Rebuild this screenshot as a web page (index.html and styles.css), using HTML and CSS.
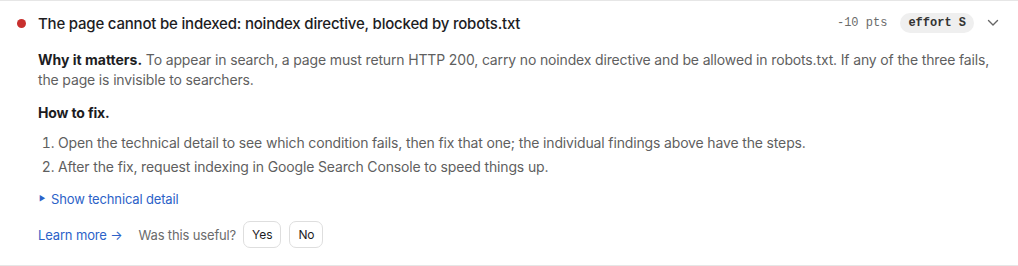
FILE: index.html
```html
<!DOCTYPE html>
<html lang="en">
<head>
<meta charset="utf-8">
<link rel="stylesheet" href="styles.css">
</head>
<body>
<section class="finding">
  <header class="finding-head">
    <span class="dot"></span>
    <h3 class="title">The page cannot be indexed: noindex directive, blocked by robots.txt</h3>
    <span class="pts">-10 pts</span>
    <span class="effort">effort S</span>
    <svg class="chev" width="12" height="8" viewBox="0 0 12 8"><path d="M1.5 1.5 L6 6 L10.5 1.5" fill="none" stroke="#666" stroke-width="1.4" stroke-linecap="round" stroke-linejoin="round"/></svg>
  </header>
  <div class="finding-body">
    <p class="why"><strong>Why it matters.</strong> To appear in search, a page must return HTTP 200, carry no noindex directive and be allowed in robots.txt. If any of the three fails, the page is invisible to searchers.</p>
    <h4 class="howto">How to fix.</h4>
    <ol class="steps">
      <li>Open the technical detail to see which condition fails, then fix that one; the individual findings above have the steps.</li>
      <li>After the fix, request indexing in Google Search Console to speed things up.</li>
    </ol>
    <div class="detail"><span class="tri">▶</span>Show technical detail</div>
    <div class="foot">
      <a class="learn" href="#">Learn more →</a>
      <span class="useful">Was this useful?</span>
      <button class="btn">Yes</button>
      <button class="btn">No</button>
    </div>
  </div>
</section>
</body>
</html>
```
FILE: styles.css
```css
* { box-sizing: border-box; }
body {
  margin: 0;
  background: #fff;
  font-family: Inter, "Noto Sans", sans-serif;
  color: #1f1f1f;
}
.finding {
  border-top: 1px solid #e6e6e6;
  border-bottom: 1px solid #e6e6e6;
  height: 266px;
}
.finding-head {
  display: flex;
  align-items: center;
  height: 44px;
  padding: 0 19px 0 17px;
}
.dot {
  width: 9px;
  height: 9px;
  border-radius: 50%;
  background: #c8302e;
  margin-right: 12px;
}
.title {
  margin: 0;
  font-size: 15px;
  font-weight: 500;
  letter-spacing: -0.2px;
  color: #1d1d1f;
  flex: 1;
}
.pts {
  font-family: "Liberation Mono", monospace;
  font-size: 12px;
  color: #6b6b6b;
  margin-right: 13px;
}
.effort {
  font-family: "Liberation Mono", monospace;
  font-size: 12px;
  font-weight: bold;
  color: #333;
  background: #efefef;
  border-radius: 10px;
  padding: 3px 8px;
  margin-right: 13px;
}
.chev { display: block; }
.finding-body {
  padding: 5px 20px 0 38px;
  font-size: 14px;
  letter-spacing: -0.15px;
  color: #5f5f5f;
}
.why {
  margin: 0;
  line-height: 20px;
}
.why strong { color: #1d1d1f; font-weight: 700; letter-spacing: 0; }
.howto {
  margin: 13px 0 0;
  font-size: 14px;
  font-weight: 700;
  color: #1d1d1f;
  line-height: 20px;
}
.steps {
  margin: 8px 0 0;
  padding-left: 20px;
}
.steps li { line-height: 24px; }
.detail {
  display: flex;
  align-items: center;
  margin-top: 10px;
  font-size: 13px;
  color: #2c62c8;
  line-height: 20px;
}
.tri { font-size: 7px; width: 13px; padding-left: 1px; }
.foot {
  display: flex;
  align-items: center;
  margin-top: 12px;
  font-size: 13px;
}
.learn {
  color: #2c62c8;
  text-decoration: none;
  margin-right: 16px;
}
.useful { color: #6b6b6b; margin-right: 7px; }
.btn {
  font-family: inherit;
  font-size: 12px;
  letter-spacing: -0.1px;
  color: #1d1d1f;
  background: #fff;
  border: 1px solid #dedede;
  border-radius: 7px;
  height: 27px;
  padding: 0 8px;
  margin-right: 8px;
}
```
